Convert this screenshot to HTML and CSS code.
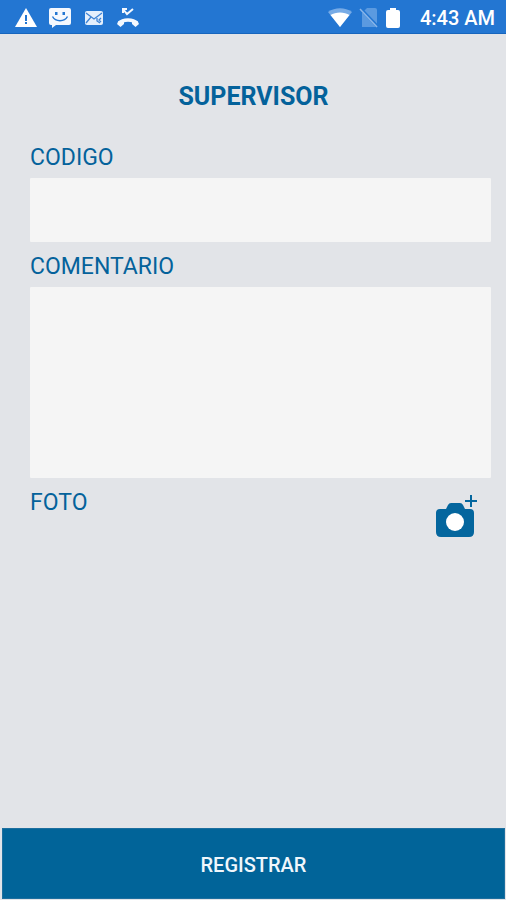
FILE: index.html
```html
<!DOCTYPE html>
<html lang="es">
<head>
<meta charset="utf-8">
<meta name="viewport" content="width=device-width, initial-scale=1">
<title>Supervisor</title>
<link rel="stylesheet" href="styles.css">
</head>
<body>
<header class="status">
  <div class="status-group notices">
    <svg width="22" height="20" viewBox="0 0 22 20" aria-hidden="true"><path fill="#fff" d="M11 0 22 19H0z"/><path fill="#2376d2" d="M10 7h2v6h-2zM10 14h2v2h-2z"/></svg>
    <svg width="22" height="20" viewBox="0 0 22 20" aria-hidden="true"><path fill="#f4f8fe" d="M2 0h18a2 2 0 0 1 2 2v13a2 2 0 0 1-2 2H7l-4 3v-3H2a2 2 0 0 1-2-2V2a2 2 0 0 1 2-2z"/><path fill="#2376d2" d="M6 4h2.500v3H6zM13.500 4H16v3h-2.500z"/><path fill="none" stroke="#2376d2" stroke-width="1.500" d="M3.500 8.500c3 5.500 12 5.500 15 0"/></svg>
    <svg class="mail" width="18" height="14" viewBox="0 0 18 14" aria-hidden="true"><rect width="18" height="14" rx="2" fill="#e4effc"/><path fill="none" stroke="#3e83d4" stroke-width="1.300" d="m1 2 8 6 8-6M1 12l5-6M12 7v3l3 2M16 7l-2 2 2 2"/></svg>
    <svg width="22" height="20" viewBox="0 0 22 20" aria-hidden="true"><path fill="none" stroke="#f4f8fe" stroke-width="2" d="M6 5V1h4M6 1l4 5 6-5"/><path fill="none" stroke="#f4f8fe" stroke-width="3.600" d="M2 15.500c4-4.600 14-4.600 18 0"/><path fill="#f4f8fe" d="M1.500 13 7 12v4l-3.500 3L0 16zM20.500 13 15 12v4l3.500 3L22 16z"/></svg>
  </div>
  <div class="status-group system">
    <svg width="24" height="20" viewBox="0 0 24 20" aria-hidden="true"><path fill="#77abe6" d="M0 4c7-5 17-5 24 0L12 19z"/><path fill="#fff" d="M2.500 7c5-3.500 14-3.500 19 0L12 19z"/></svg>
    <svg width="20" height="20" viewBox="0 0 20 20" aria-hidden="true"><path fill="#5b9ae0" d="M8 0h8a2 2 0 0 1 2 2v17H3V5z"/><path stroke="#2376d2" stroke-width="3" d="m2 1 17 18"/><path stroke="#8ab6e9" stroke-width="1.500" d="m1 1 17 18"/></svg>
    <svg width="14" height="20" viewBox="0 0 14 20" aria-hidden="true"><path fill="#fff" d="M4 0h6v2h2a2 2 0 0 1 2 2v14a2 2 0 0 1-2 2H2a2 2 0 0 1-2-2V4a2 2 0 0 1 2-2h2z"/></svg>
    <time class="clock">4:43 AM</time>
  </div>
</header>
<form class="form">
  <h1 class="title">SUPERVISOR</h1>
  <label class="label" for="codigo">CODIGO</label>
  <input class="field code" id="codigo" type="text">
  <label class="label" for="comentario">COMENTARIO</label>
  <textarea class="field comment" id="comentario"></textarea>
  <div class="photo">
    <label class="label" for="foto">FOTO</label>
    <button class="camera" id="foto" type="button" aria-label="Agregar foto">
      <svg width="44" height="44" viewBox="0 0 44 44" aria-hidden="true"><path fill="#04669e" d="M5 15h6l2-4q1-2 3-2h9q2 0 3 2l2 4h5q4 0 4 4v19q0 5-5 5H6q-5 0-5-5V19q0-4 4-4z"/><circle cx="20" cy="28" r="9" fill="#fff"/><path fill="none" stroke="#04669e" stroke-width="2" d="M36 1v12M30 7h12"/></svg>
    </button>
  </div>
  <button class="submit" type="submit">REGISTRAR</button>
</form>
</body>
</html>
```
FILE: styles.css
```css
* {
  box-sizing: border-box;
}

body {
  margin: 0;
  min-height: 100vh;
  display: flex;
  flex-direction: column;
  background: #e2e4e8;
  color: #04629b;
  font-family: Roboto, "Liberation Sans", sans-serif;
}

svg {
  display: block;
  flex: none;
}

.status {
  display: flex;
  align-items: center;
  justify-content: space-between;
  height: 34px;
  padding: 2px 11px 0 15px;
  background: #2376d2;
  border-bottom: 1px solid #1765bd;
  color: #fff;
}

.status-group {
  display: flex;
  align-items: center;
}

.notices {
  gap: 12px;
}

.mail {
  margin: 0 2px;
}

.system {
  gap: 7px;
}

.clock {
  margin-left: 13px;
  font-size: 20px;
  font-weight: 500;
  line-height: 24px;
}

.form {
  flex: 1;
  display: flex;
  flex-direction: column;
  padding: 0 1px 1px 2px;
}

.title {
  margin: 47px 0 29px;
  font-size: 25px;
  font-weight: 700;
  line-height: 32px;
  text-align: center;
}

.label {
  margin: 0 28px 4px;
  font-size: 23px;
  line-height: 32px;
}

.field {
  margin: 0 14px 9px 28px;
  padding: 12px;
  border: 0;
  border-radius: 1px;
  outline: 0;
  background: #f5f5f5;
  color: inherit;
  font: inherit;
  font-size: 23px;
  resize: none;
}

.code {
  height: 64px;
}

.comment {
  height: 191px;
}

.photo {
  display: flex;
  justify-content: space-between;
  align-items: flex-start;
  padding-right: 26px;
}

.camera {
  margin-top: 7px;
  padding: 0;
  border: 0;
  background: none;
  cursor: pointer;
}

.submit {
  height: 71px;
  margin-top: auto;
  padding: 2px 0 0;
  border: 1px solid #1d6f9f;
  background: #016499;
  color: #f0f7fc;
  font: inherit;
  font-size: 20px;
  font-weight: 500;
  cursor: pointer;
}
```
